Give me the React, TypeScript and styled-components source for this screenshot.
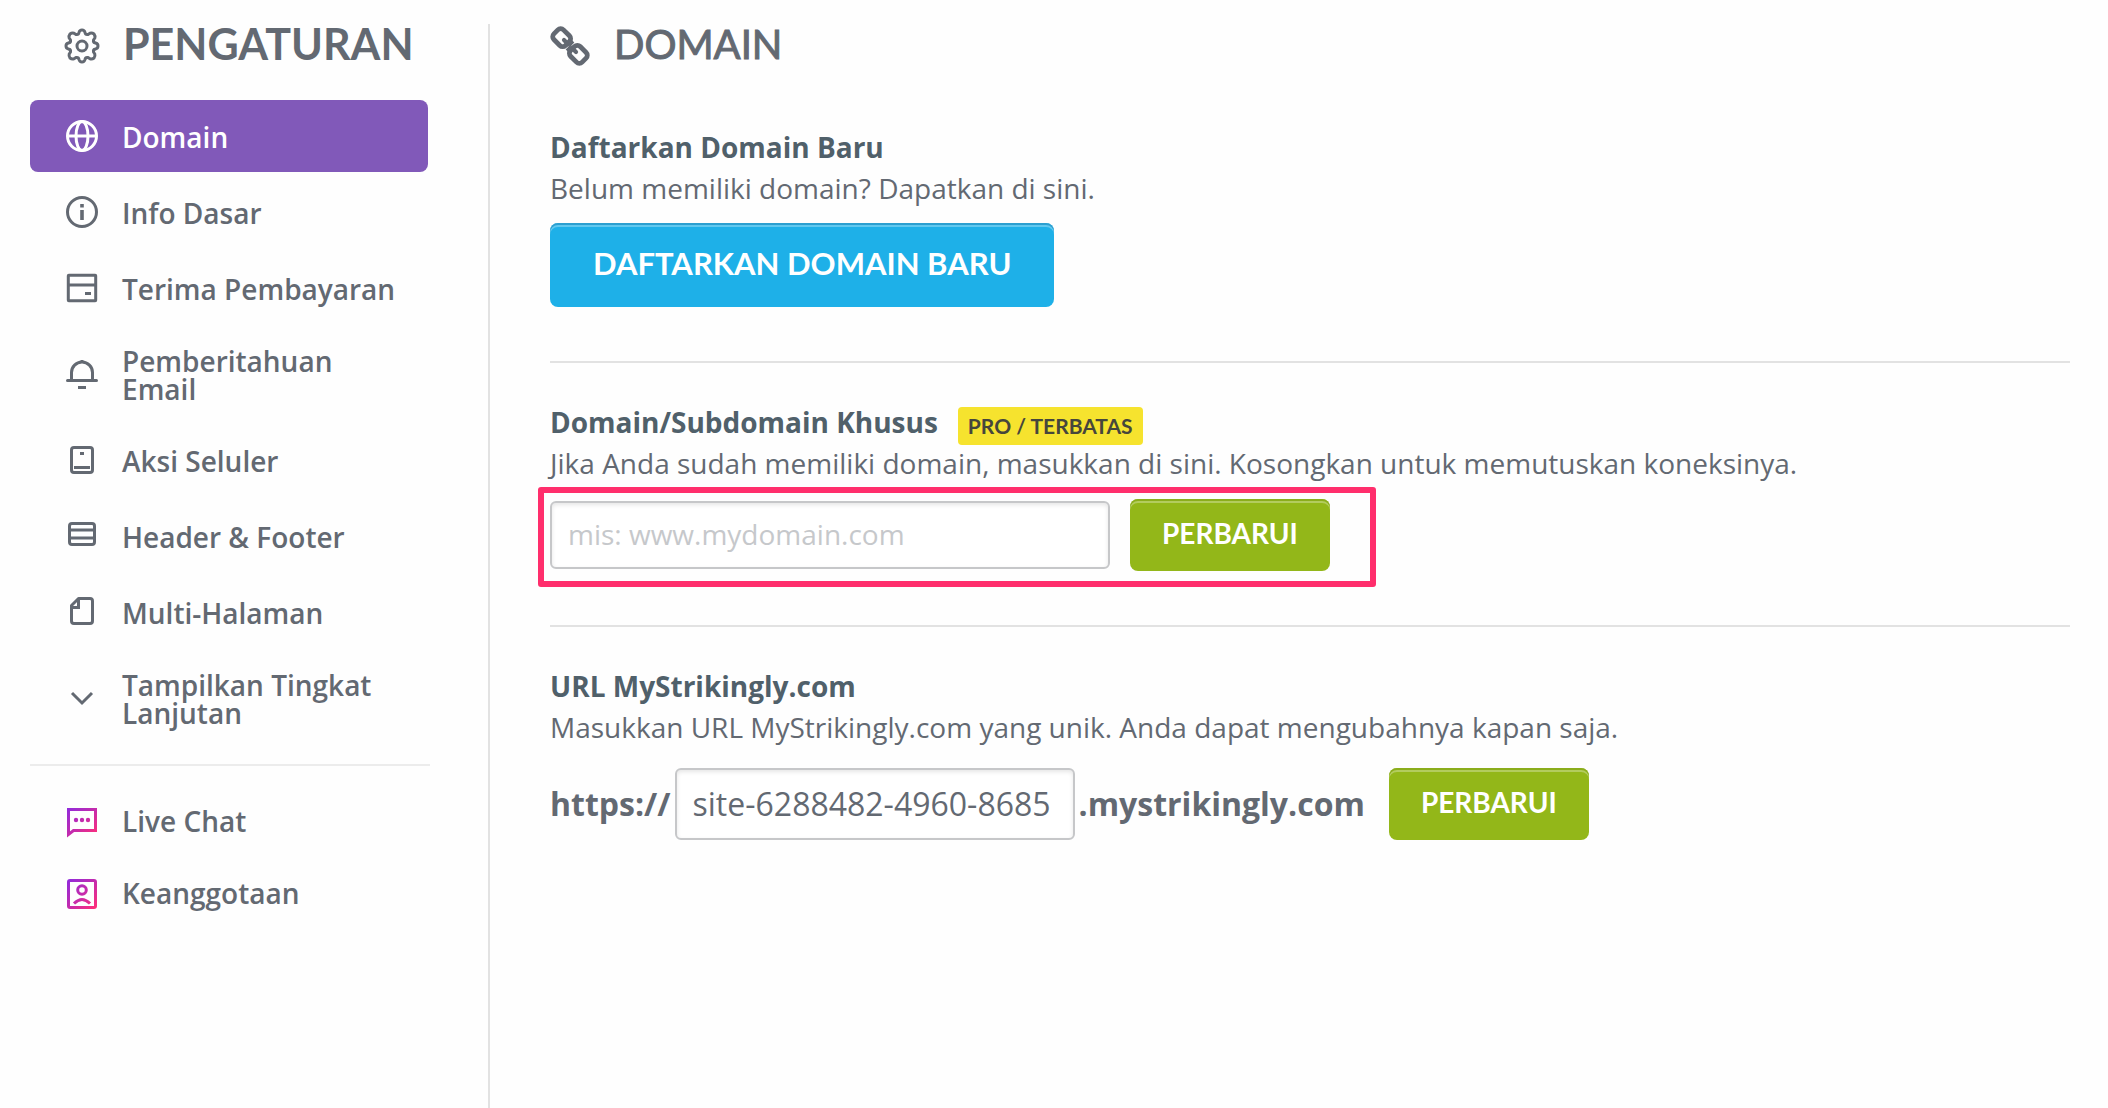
import React from 'react';
import styled, { createGlobalStyle } from 'styled-components';

const BODY = "'Open Sans', 'Noto Sans', sans-serif";
const DISPLAY = "Lato, 'Open Sans', sans-serif";
const INK = '#636972';

const GlobalStyle = createGlobalStyle`
  *, *::before, *::after { box-sizing: border-box; }
  body { margin: 0; background: #fefefe; color: ${INK}; font-family: ${BODY}; font-size: 28px; }
  h1, h2, h3, p, ul { margin: 0; padding: 0; }
`;

const Page = styled.div`
  display: flex;
  align-items: stretch;
  min-height: 100vh;
  padding-top: 24px;
`;

const Sidebar = styled.aside`
  flex: none;
  width: 488px;
  padding: 0 58px 24px 30px;
`;

const PageHeading = styled.div<{ $inset?: number; $gap: number }>`
  display: flex;
  align-items: center;
  gap: ${(p) => p.$gap}px;
  height: 44px;
  padding-left: ${(p) => p.$inset ?? 0}px;
  svg { flex: none; }
`;

const SidebarTitle = styled.h1`
  padding-bottom: 4px;
  font: 700 43px/40px ${DISPLAY};
`;

const Nav = styled.nav`
  margin-top: 32px;
`;

const NavList = styled.ul<{ $gap?: number }>`
  display: flex;
  flex-direction: column;
  gap: ${(p) => p.$gap ?? 0}px;
  margin-right: 2px;
  list-style: none;
`;

const NavLink = styled.a<{ $active?: boolean }>`
  display: flex;
  align-items: center;
  gap: 22px;
  min-height: 72px;
  padding: 17px 30px 17px 34px;
  border-radius: 8px;
  background: ${(p) => (p.$active ? '#8159b9' : 'transparent')};
  color: ${(p) => (p.$active ? '#fff' : INK)};
  font-weight: 600;
  line-height: 28px;
  text-decoration: none;
  svg { flex: none; }
`;

const NavLabel = styled.span`
  padding-top: 2px;
`;

const NavDivider = styled.hr`
  height: 2px;
  margin: 20px 0 18px;
  border: 0;
  background: #ececec;
`;

const Main = styled.main`
  flex: 1;
  min-width: 0;
  padding: 0 38px 40px 60px;
  border-left: 2px solid #e2e2e2;
`;

const MainTitle = styled.h2`
  padding-bottom: 4px;
  font: 400 40px/40px ${DISPLAY};
  -webkit-text-stroke: 1px currentColor;
`;

const Section = styled.section<{ $top: number; $bottom: number }>`
  padding: ${(p) => p.$top}px 0 ${(p) => p.$bottom}px;
  & + & { border-top: 2px solid #e2e2e2; }
`;

const TitleRow = styled.div`
  display: flex;
  align-items: flex-end;
  gap: 20px;
`;

const SectionTitle = styled.h3`
  color: #50606a;
  font-size: 28px;
  font-weight: 700;
  line-height: 42px;
`;

const Description = styled.p`
  line-height: 40px;
`;

const Badge = styled.span`
  margin-bottom: -2px;
  padding: 0 10px;
  border-radius: 4px;
  background: #f6e32e;
  color: #46463c;
  font: 700 21px/38px ${DISPLAY};
`;

const Button = styled.button<{ $tone: 'blue' | 'green' }>`
  flex: none;
  height: ${(p) => (p.$tone === 'blue' ? 84 : 72)}px;
  padding: 0 ${(p) => (p.$tone === 'blue' ? 43 : 32)}px 4px;
  border: 0;
  border-radius: 8px;
  background: ${(p) => (p.$tone === 'blue' ? '#1eb0e8' : '#93b719')};
  box-shadow:
    inset 0 2px 0 ${(p) => (p.$tone === 'blue' ? '#2c9fd0' : '#8bad1c')},
    inset 0 4px 0 rgba(255, 255, 255, 0.3);
  color: #fff;
  font: 700 ${(p) => (p.$tone === 'blue' ? 31 : 28)}px/40px ${DISPLAY};
  cursor: pointer;
`;

const RegisterButton = styled(Button)`
  margin-top: 15px;
`;

const TextInput = styled.input<{ $width: number; $height: number; $size: number }>`
  width: ${(p) => p.$width}px;
  height: ${(p) => p.$height}px;
  padding: 0 16px 2px;
  border: 2px solid #c6c7c9;
  border-radius: 6px;
  background: #fff;
  box-shadow: inset 0 2px 4px rgba(0, 0, 0, 0.1);
  color: ${INK};
  font: 400 ${(p) => p.$size}px ${BODY};
  &::placeholder { color: #c6c8cb; opacity: 1; }
`;

const HighlightedForm = styled.form`
  display: flex;
  align-items: center;
  gap: 20px;
  width: fit-content;
  margin: 4px 0 0 -12px;
  padding: 6px 40px 10px 6px;
  border: 6px solid #ff2e6c;
  border-radius: 3px;
`;

const UrlForm = styled.form`
  display: flex;
  align-items: center;
  margin-top: 21px;
`;

const UrlPart = styled.label`
  font-size: 32px;
  font-weight: 700;
  line-height: 40px;
`;

const UrlField = styled.div`
  display: flex;
  align-items: center;
  gap: 4px;
  margin-right: 24px;
`;

const Icon = ({ children }: { children: React.ReactNode }) => (
  <svg width="36" height="36" viewBox="0 0 36 36" fill="none" stroke="currentColor" strokeWidth="3" aria-hidden="true">
    {children}
  </svg>
);

const GearIcon = () => (
  <Icon>
    <circle cx="18" cy="18" r="5" />
    <path
      strokeLinejoin="round"
      d="M15 4.5Q15.600 2 18 2Q20.400 2 21 4.500Q21.500 7 24 6.500L26 5.200Q28.200 4.600 30 6Q31.400 7.800 30.800 10L29.500 12Q29 14.500 31.500 15Q34 15.600 34 18Q34 20.400 31.500 21Q29 21.500 29.500 24L30.800 26Q31.400 28.200 30 30Q28.200 31.400 26 30.800L24 29.500Q21.500 29 21 31.500Q20.400 34 18 34Q15.600 34 15 31.500Q14.500 29 12 29.500L10 30.800Q7.800 31.400 6 30Q4.600 28.200 5.200 26L6.500 24Q7 21.500 4.500 21Q2 20.400 2 18Q2 15.600 4.500 15Q7 14.500 6.500 12L5.200 10Q4.600 7.800 6 6Q7.800 4.600 10 5.200L12 6.500Q14.500 7 15 4.500Z"
    />
  </Icon>
);

const GlobeIcon = () => (
  <Icon>
    <circle cx="18" cy="18" r="14.500" />
    <ellipse cx="18" cy="18" rx="6" ry="14.500" />
    <path d="M3 18H33" />
  </Icon>
);

const InfoIcon = () => (
  <Icon>
    <circle cx="18" cy="18" r="14.500" />
    <path strokeWidth="3.600" d="M18 10V13.500M18 16V26" />
  </Icon>
);

const CardIcon = () => (
  <Icon>
    <rect x="4.300" y="5.300" width="27.400" height="25.400" rx="0.500" />
    <path d="M4 15H32M21 23.500H27" />
  </Icon>
);

const BellIcon = () => (
  <Icon>
    <path d="M7.500 23V16.500A10.500 10.500 0 0 1 28.500 16.500V23M18 4V7" />
    <path strokeLinecap="round" d="M3.500 24.500H32.500" />
    <path d="M14 31.500H22" />
  </Icon>
);

const PhoneIcon = () => (
  <Icon>
    <rect x="7.500" y="5.500" width="21" height="25" rx="2.500" />
    <path d="M10 25.500H26M16 11.500H20" />
  </Icon>
);

const RowsIcon = () => (
  <Icon>
    <rect x="5.500" y="5.500" width="25" height="21" rx="2.500" />
    <path d="M5 12H31M5 20H31" />
  </Icon>
);

const PageIcon = () => (
  <Icon>
    <path strokeLinejoin="round" d="M14.500 4.500H26Q28.500 4.500 28.500 7V27Q28.500 29.500 26 29.500H10Q7.500 29.500 7.500 27V11.500Z" />
    <path d="M14.500 4V13.500H7" />
  </Icon>
);

const ChevronIcon = () => (
  <Icon>
    <path d="M8 13L18 23L28 13" />
  </Icon>
);

const BrandGradient = ({ id }: { id: string }) => (
  <defs>
    <linearGradient id={id} x1="3" y1="3" x2="33" y2="33" gradientUnits="userSpaceOnUse">
      <stop offset="0" stopColor="#8a2be2" />
      <stop offset="0.5" stopColor="#c02bb0" />
      <stop offset="1" stopColor="#ff2e78" />
    </linearGradient>
  </defs>
);

const ChatIcon = () => (
  <Icon>
    <BrandGradient id="chat-gradient" />
    <path stroke="url(#chat-gradient)" d="M4.500 7.500H31.500V28.500H9.500L4.500 32.500Z" />
    <g fill="url(#chat-gradient)" stroke="none">
      <circle cx="12" cy="18" r="2.200" />
      <circle cx="18" cy="18" r="2.200" />
      <circle cx="24" cy="18" r="2.200" />
    </g>
  </Icon>
);

const MemberIcon = () => (
  <Icon>
    <BrandGradient id="member-gradient" />
    <g stroke="url(#member-gradient)">
      <rect x="4.500" y="6.500" width="27" height="27" rx="1.500" />
      <circle cx="18" cy="16" r="4.300" />
      <path d="M10 29.500Q18 21.500 26 29.500" />
    </g>
  </Icon>
);

const LinkIcon = () => (
  <svg width="40" height="40" viewBox="0 0 40 40" fill="none" stroke="currentColor" strokeWidth="4.800" aria-hidden="true">
    <g transform="rotate(45 20 20)">
      <rect x="0" y="13.200" width="16.400" height="13.600" rx="4" />
      <rect x="23.600" y="13.200" width="16.400" height="13.600" rx="4" />
      <path strokeLinecap="round" strokeWidth="4.200" d="M11.500 20H17.500M22.500 20H28.500" />
      <path strokeWidth="4.200" d="M18.500 14.500V20M21.500 20V25.500" />
    </g>
  </svg>
);

const settingsItems = [
  { label: 'Domain', icon: <GlobeIcon />, active: true },
  { label: 'Info Dasar', icon: <InfoIcon /> },
  { label: 'Terima Pembayaran', icon: <CardIcon /> },
  { label: 'Pemberitahuan Email', icon: <BellIcon /> },
  { label: 'Aksi Seluler', icon: <PhoneIcon /> },
  { label: 'Header & Footer', icon: <RowsIcon /> },
  { label: 'Multi-Halaman', icon: <PageIcon /> },
  { label: 'Tampilkan Tingkat Lanjutan', icon: <ChevronIcon /> },
];

const supportItems = [
  { label: 'Live Chat', icon: <ChatIcon /> },
  { label: 'Keanggotaan', icon: <MemberIcon /> },
];

const stay = (e: React.FormEvent) => e.preventDefault();

export default function App() {
  return (
    <>
      <GlobalStyle />
      <Page>
        <Sidebar>
          <PageHeading $inset={34} $gap={23}>
            <GearIcon />
            <SidebarTitle>PENGATURAN</SidebarTitle>
          </PageHeading>
          <Nav>
            <NavList $gap={4}>
              {settingsItems.map((item) => (
                <li key={item.label}>
                  <NavLink href="#" $active={item.active} aria-current={item.active ? 'page' : undefined}>
                    {item.icon}
                    <NavLabel>{item.label}</NavLabel>
                  </NavLink>
                </li>
              ))}
            </NavList>
            <NavDivider />
            <NavList>
              {supportItems.map((item) => (
                <li key={item.label}>
                  <NavLink href="#">
                    {item.icon}
                    <NavLabel>{item.label}</NavLabel>
                  </NavLink>
                </li>
              ))}
            </NavList>
          </Nav>
        </Sidebar>
        <Main>
          <PageHeading $gap={24}>
            <LinkIcon />
            <MainTitle>DOMAIN</MainTitle>
          </PageHeading>
          <Section $top={58} $bottom={54}>
            <SectionTitle>Daftarkan Domain Baru</SectionTitle>
            <Description>Belum memiliki domain? Dapatkan di sini.</Description>
            <RegisterButton type="button" $tone="blue">DAFTARKAN DOMAIN BARU</RegisterButton>
          </Section>
          <Section $top={38} $bottom={38}>
            <TitleRow>
              <SectionTitle as="label" htmlFor="custom-domain">Domain/Subdomain Khusus</SectionTitle>
              <Badge>PRO / TERBATAS</Badge>
            </TitleRow>
            <Description>Jika Anda sudah memiliki domain, masukkan di sini. Kosongkan untuk memutuskan koneksinya.</Description>
            <HighlightedForm onSubmit={stay}>
              <TextInput id="custom-domain" type="text" placeholder="mis: www.mydomain.com" $width={560} $height={68} $size={28} />
              <Button type="submit" $tone="green">PERBARUI</Button>
            </HighlightedForm>
          </Section>
          <Section $top={38} $bottom={38}>
            <SectionTitle>URL MyStrikingly.com</SectionTitle>
            <Description>Masukkan URL MyStrikingly.com yang unik. Anda dapat mengubahnya kapan saja.</Description>
            <UrlForm onSubmit={stay}>
              <UrlField>
                <UrlPart htmlFor="site-name">https://</UrlPart>
                <TextInput id="site-name" type="text" defaultValue="site-6288482-4960-8685" $width={400} $height={72} $size={32} />
                <UrlPart as="span">.mystrikingly.com</UrlPart>
              </UrlField>
              <Button type="submit" $tone="green">PERBARUI</Button>
            </UrlForm>
          </Section>
        </Main>
      </Page>
    </>
  );
}
